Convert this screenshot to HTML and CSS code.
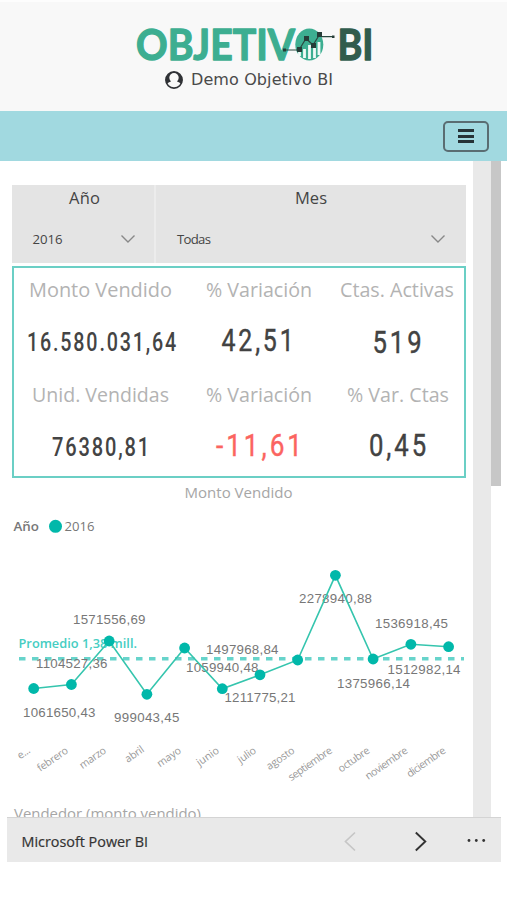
FILE: index.html
```html
<!DOCTYPE html>
<html lang="es">
<head>
<meta charset="utf-8">
<title>Objetivo BI</title>
<link rel="stylesheet" href="styles.css">
</head>
<body>
<header class="header">
  <svg class="logo" width="240" height="40" viewBox="134 24 240 40">
    <text class="brand" x="136" y="60" textLength="159" lengthAdjust="spacingAndGlyphs">OBJETIV</text>
    <ellipse class="globe" cx="309.300" cy="44.500" rx="14" ry="16"/>
    <path class="bars" d="M299.500 52v4M304.500 49v9M309.500 45v14M314.500 47v11M319 42v13"/>
    <path class="trend" d="M284 50H299L306 38.500L313 45L319 35.500L322 36.700H333"/>
    <path class="knots" d="M297 47h5v5h-5zM304 36h5v5h-5zM311 43h5v5h-5zM317 32h5v5h-5zM283 48.500h3v3h-3zM332 35.500h2.500v2.500h-2.500z"/>
    <text class="brand dark" x="337.500" y="60" textLength="36" lengthAdjust="spacingAndGlyphs">BI</text>
  </svg>
  <div class="user">
    <svg width="18" height="18" viewBox="0 0 18 18"><circle cx="9" cy="9" r="8.100" fill="none" stroke="#303236" stroke-width="1.700"/><path fill-rule="evenodd" d="M9 1a8 8 0 0 1 7 12c-.8-1.200-2.300-2-4-2.600a4.700 4.700 0 1 0-6 0c-1.700.6-3.200 1.400-4 2.600A8 8 0 0 1 9 1z" fill="#303236"/></svg>
    <svg class="username" width="144" height="22"><text x="1" y="16" textLength="142">Demo Objetivo BI</text></svg>
  </div>
</header>
<nav class="nav">
  <button class="menu" aria-label="Menú"><span></span><span></span><span></span></button>
</nav>
<main class="report">
  <div class="page">
    <section class="filters">
      <div class="filter">
        <svg width="142" height="78"><text class="ftitle" x="57" y="18.500" textLength="31">Año</text><text class="fvalue" x="20.500" y="59" textLength="30">2016</text><path class="chev" d="M109.500 50.500l6.500 6.500 6.500-6.500"/></svg>
      </div>
      <div class="filter">
        <svg width="310" height="78"><text class="ftitle" x="139" y="18.500" textLength="32">Mes</text><text class="fvalue" x="21" y="59" textLength="34">Todas</text><path class="chev" d="M275.500 50.500l6.500 6.500 6.500-6.500"/></svg>
      </div>
    </section>
    <section class="kpis">
      <svg><text class="label" x="15" y="28.500" textLength="143" lengthAdjust="spacingAndGlyphs">Monto Vendido</text><text class="value" x="13" y="82.500" textLength="151" lengthAdjust="spacingAndGlyphs">16.580.031,64</text></svg>
      <svg><text class="label" x="16" y="28.500" textLength="106" lengthAdjust="spacingAndGlyphs">% Variación</text><text class="value big" x="31.500" y="82.500" textLength="75" lengthAdjust="spacingAndGlyphs">42,51</text></svg>
      <svg><text class="label" x="13" y="28.500" textLength="114" lengthAdjust="spacingAndGlyphs">Ctas. Activas</text><text class="value big" x="45.500" y="84.500" textLength="52" lengthAdjust="spacingAndGlyphs">519</text></svg>
      <svg><text class="label" x="18" y="28.500" textLength="137" lengthAdjust="spacingAndGlyphs">Unid. Vendidas</text><text class="value" x="38" y="82.500" textLength="99" lengthAdjust="spacingAndGlyphs">76380,81</text></svg>
      <svg><text class="label" x="16" y="28.500" textLength="106" lengthAdjust="spacingAndGlyphs">% Variación</text><text class="value big red" x="26" y="82.500" textLength="89" lengthAdjust="spacingAndGlyphs">-11,61</text></svg>
      <svg><text class="label" x="20" y="28.500" textLength="102" lengthAdjust="spacingAndGlyphs">% Var. Ctas</text><text class="value big" x="42" y="82.500" textLength="60" lengthAdjust="spacingAndGlyphs">0,45</text></svg>
    </section>
    <svg class="chart" width="465" height="339" viewBox="7 478 465 339">
      <text class="ctitle" x="184.500" y="498" textLength="108" lengthAdjust="spacingAndGlyphs">Monto Vendido</text>
      <text class="legend strong" x="13.500" y="531" textLength="25.500" lengthAdjust="spacingAndGlyphs">Año</text>
      <circle class="dot" cx="55.500" cy="526.300" r="6.500"/>
      <text class="legend" x="64.500" y="531" textLength="30" lengthAdjust="spacingAndGlyphs">2016</text>
      <path class="average" d="M19 658.800H464"/>
      <text class="avg" x="18.500" y="648" textLength="118.500" lengthAdjust="spacingAndGlyphs">Promedio 1,38 mill.</text>
      <g class="data">
        <text x="23" y="717" textLength="72.500">1061650,43</text>
        <text x="36" y="668" textLength="71.500">1104527,36</text>
        <text x="73" y="624" textLength="72.500">1571556,69</text>
        <text x="114" y="721.500" textLength="65.500">999043,45</text>
        <text x="186" y="672" textLength="72.500">1059940,48</text>
        <text x="206" y="653.500" textLength="72.500">1497968,84</text>
        <text x="224.500" y="702" textLength="71">1211775,21</text>
        <text x="299" y="603" textLength="73">2278940,88</text>
        <text x="337" y="687.500" textLength="73">1375966,14</text>
        <text x="375" y="627.500" textLength="73">1536918,45</text>
        <text x="387.500" y="674" textLength="73">1512982,14</text>
      </g>
      <polyline class="line" points="33.700,688.500 71.400,684.500 109.200,641 146.900,694.300 184.600,648 222.300,688.700 260,674.800 297.700,660 335.400,575.300 373.100,659 410.900,644.300 448.600,646.700"/>
      <g class="dots">
        <circle cx="33.700" cy="688.500" r="5.400"/><circle cx="71.400" cy="684.500" r="5.400"/><circle cx="109.200" cy="641" r="5.400"/><circle cx="146.900" cy="694.300" r="5.400"/><circle cx="184.600" cy="648" r="5.400"/><circle cx="222.300" cy="688.700" r="5.400"/><circle cx="260" cy="674.800" r="5.400"/><circle cx="297.700" cy="660" r="5.400"/><circle cx="335.400" cy="575.300" r="5.400"/><circle cx="373.100" cy="659" r="5.400"/><circle cx="410.900" cy="644.300" r="5.400"/><circle cx="448.600" cy="646.700" r="5.400"/>
      </g>
      <g class="months">
        <text transform="translate(31,752) rotate(-35)" textLength="13">e...</text>
        <text transform="translate(69,752) rotate(-35)" textLength="35">febrero</text>
        <text transform="translate(107,752) rotate(-35)" textLength="30">marzo</text>
        <text transform="translate(145,751) rotate(-35)" textLength="21">abril</text>
        <text transform="translate(182,752) rotate(-35)" textLength="27">mayo</text>
        <text transform="translate(220,752) rotate(-35)" textLength="25">junio</text>
        <text transform="translate(257,752) rotate(-35)" textLength="20">julio</text>
        <text transform="translate(295.500,752) rotate(-35)" textLength="32">agosto</text>
        <text transform="translate(333,752) rotate(-35)" textLength="51">septiembre</text>
        <text transform="translate(370.500,752) rotate(-35)" textLength="36">octubre</text>
        <text transform="translate(408.500,752) rotate(-35)" textLength="49">noviembre</text>
        <text transform="translate(446.500,752) rotate(-35)" textLength="45">diciembre</text>
      </g>
      <text class="ctitle" x="14" y="819" textLength="187" lengthAdjust="spacingAndGlyphs">Vendedor (monto vendido)</text>
    </svg>
  </div>
  <div class="gutter"></div>
  <div class="scroll"><div class="thumb"></div></div>
</main>
<footer class="footer">
  <svg width="494" height="44" viewBox="7 818 494 44">
    <text class="power" x="21.500" y="847.300" textLength="126.500" lengthAdjust="spacingAndGlyphs">Microsoft Power BI</text>
    <path d="M355 832.500l-9.500 9 9.500 9" fill="none" stroke="#c6c6c6" stroke-width="1.700"/>
    <path d="M415.800 832.500l9.500 9-9.500 9" fill="none" stroke="#333" stroke-width="1.900"/>
    <g fill="#333"><circle cx="469" cy="840.500" r="1.400"/><circle cx="476.300" cy="840.500" r="1.400"/><circle cx="483.700" cy="840.500" r="1.400"/></g>
  </svg>
</footer>
</body>
</html>
```
FILE: styles.css
```css
* { box-sizing: border-box; }
body { margin: 0; background: #fff; font-family: "Open Sans", "Noto Sans", sans-serif; }
svg { display: block; }
.header { height: 111px; background: #f8f8f8; border-top: 2px solid #fdfdfd; padding-top: 22px; display: flex; flex-direction: column; align-items: center; }
.logo { overflow: visible; }
.brand { font: 700 42.5px Lato, sans-serif; fill: #3dae91; stroke: #3dae91; stroke-width: 1.3; stroke-linejoin: round; }
.brand.dark { fill: #315c4d; stroke: #315c4d; }
.globe { fill: #3dae91; }
.bars { stroke: #f1faf7; stroke-width: 2.8; fill: none; }
.trend { stroke: #29483f; stroke-width: 1.2; fill: none; }
.knots { fill: #263d38; }
.user { display: flex; align-items: center; gap: 7px; margin: 5px 8px 0 0; }
.username { font: 16px "DejaVu Sans", sans-serif; fill: #4a4a4a; }
.nav { height: 50px; background: #a1d9e0; display: flex; justify-content: flex-end; align-items: center; padding-right: 18px; }
.menu { width: 46px; height: 31px; border: 2px solid #5a6d72; border-radius: 5px; background: transparent; padding: 0; display: flex; flex-direction: column; justify-content: center; align-items: center; gap: 2.5px; }
.menu span { width: 16px; height: 3px; background: #263337; }
.report { height: 656px; margin-left: 7px; display: flex; overflow: hidden; }
.page { width: 465.5px; padding-top: 24px; }
.filters { margin-left: 5px; width: 454px; height: 78px; display: flex; gap: 1.5px; background: #ececec; }
.filter { background: #e4e4e4; overflow: hidden; }
.ftitle { font-size: 16.5px; fill: #444; }
.fvalue { font-size: 13.2px; fill: #444; }
.chev { fill: none; stroke: #888; stroke-width: 1.4; }
.kpis { margin: 3px 0 0 5px; width: 454px; height: 212px; border: 2px solid #6bcfc5; display: grid; grid-template-columns: 176px 137px 137px; grid-template-rows: 105px 103px; }
.kpis svg { width: 100%; height: 100%; }
.label { font-size: 19.5px; fill: #b3b3b3; }
.value { font: 500 26px Roboto, sans-serif; letter-spacing: 2.4px; fill: #444; }
.big { font-size: 31px; font-weight: 400; letter-spacing: 3.5px; stroke: #3a3a3a; stroke-width: .4; }
.red { fill: #fb6460; stroke: #fb6460; }
.ctitle { font-size: 14.5px; fill: #a6a6a6; }
.legend { font-size: 13.3px; fill: #777; }
.strong { font-weight: 600; }
.dot, .dots { fill: #01b8aa; }
.average { stroke: #67d4cb; stroke-width: 3.5; stroke-dasharray: 6.5 6.5; }
.avg { font: 600 13px "Open Sans", sans-serif; fill: #45cdc2; }
.data { font: 13.3px "Liberation Sans", sans-serif; fill: #777; }
.line { fill: none; stroke: #35c5ae; stroke-width: 1.6; }
.months { font-size: 10.5px; fill: #999; text-anchor: end; }
.gutter { width: 18.5px; background: #e9e9e9; }
.scroll { width: 10px; }
.thumb { height: 325px; background: #c7c7c7; }
.footer { margin-left: 7px; width: 494px; height: 45px; background: #e9e9e9; border-top: 1px solid #d4d4d4; }
.power { font-size: 14.5px; fill: #333; stroke: #333; stroke-width: .2; }
```
